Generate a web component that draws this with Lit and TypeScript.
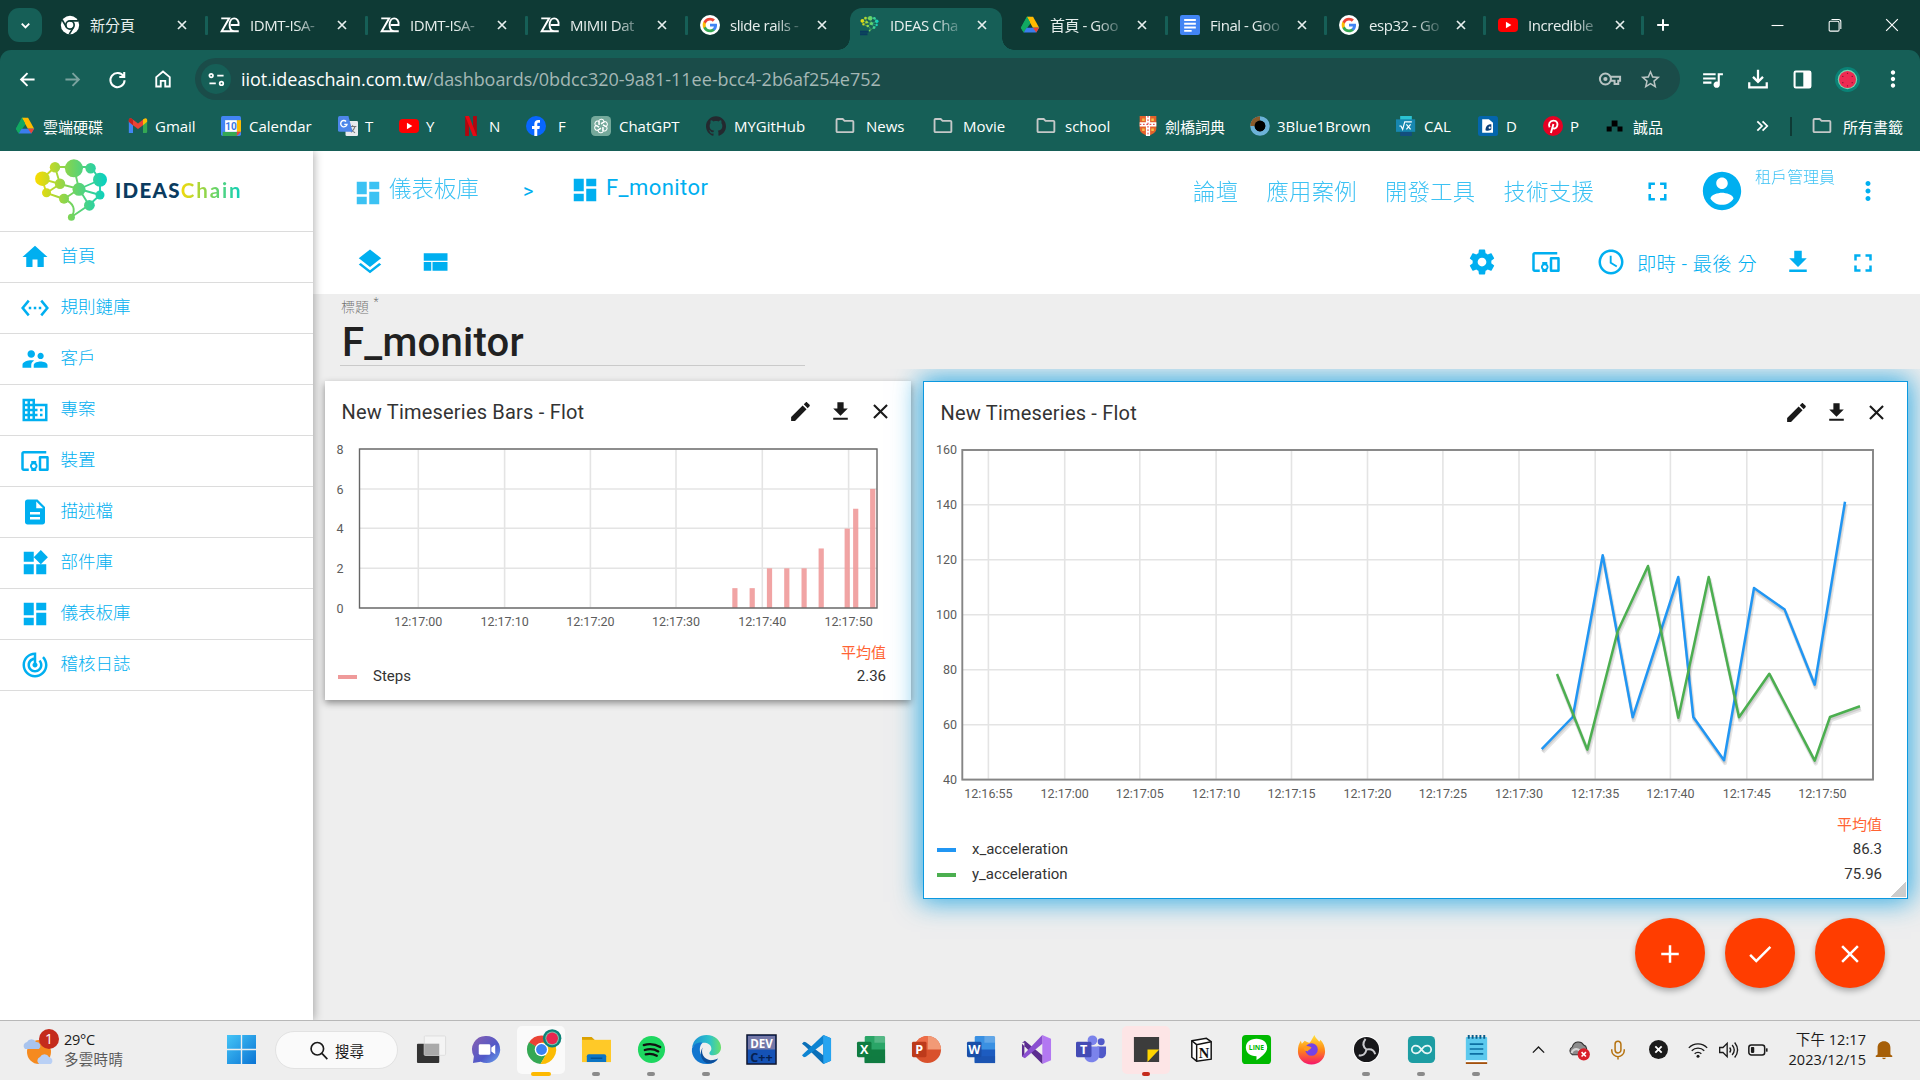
import { LitElement, html, svg, css, type SVGTemplateResult, type TemplateResult } from "lit";
import { customElement } from "lit/decorators.js";

type Art = SVGTemplateResult;

const pic = (art: Art | Art[], size = 20, box = "0 0 24 24"): TemplateResult =>
  html`<svg class="pic" width=${size} height=${size} viewBox=${box}>${art}</svg>`;
const glyph = (d: string, size = 30): TemplateResult =>
  html`<svg class="pic" width=${size} height=${size} viewBox="0 0 24 24" fill="currentColor"><path d=${d} /></svg>`;
const line = (d: string, size = 20, w = 2): TemplateResult =>
  html`<svg class="pic" width=${size} height=${size} viewBox="0 0 24 24" fill="none" stroke="currentColor" stroke-width=${w}><path d=${d} /></svg>`;

const P = {
  home: "M10 20v-6h4v6h5v-8h3L12 3 2 12h3v8z",
  rules: "M7.77 6.76L6.23 5.48.82 12l5.41 6.52 1.54-1.28L3.42 12l4.35-5.24zM7 13h2v-2H7v2zm10-2h-2v2h2v-2zm-6 2h2v-2h-2v2zm6.77-7.52l-1.54 1.28L20.58 12l-4.35 5.24 1.54 1.28L23.18 12l-5.41-6.52z",
  people: "M16.5 12c1.38 0 2.49-1.12 2.49-2.5S17.88 7 16.5 7C15.12 7 14 8.12 14 9.5s1.12 2.5 2.5 2.5zM9 11c1.66 0 2.99-1.34 2.99-3S10.66 5 9 5C7.34 5 6 6.34 6 8s1.34 3 3 3zm7.5 3c-1.83 0-5.5.92-5.5 2.75V19h11v-2.25c0-1.83-3.67-2.75-5.5-2.75zM9 13c-2.33 0-7 1.17-7 3.5V19h7v-2.25c0-.85.33-2.34 2.37-3.47C10.5 13.1 9.66 13 9 13z",
  domain: "M12 7V3H2v18h20V7H12zM6 19H4v-2h2v2zm0-4H4v-2h2v2zm0-4H4V9h2v2zm0-4H4V5h2v2zm4 12H8v-2h2v2zm0-4H8v-2h2v2zm0-4H8V9h2v2zm0-4H8V5h2v2zm10 12h-8v-2h2v-2h-2v-2h2v-2h-2V9h8v10zm-2-8h-2v2h2v-2zm0 4h-2v2h2v-2z",
  devices: "M3 6h18V4H3c-1.1 0-2 .9-2 2v12c0 1.1.9 2 2 2h4v-2H3V6zm10 6H9v1.78c-.61.55-1 1.33-1 2.22s.39 1.67 1 2.22V20h4v-1.78c.61-.55 1-1.34 1-2.22s-.39-1.67-1-2.22V12zm-2 5.5c-.83 0-1.5-.67-1.5-1.5s.67-1.5 1.5-1.5 1.5.67 1.5 1.5-.67 1.5-1.5 1.5zM22 8h-6c-.5 0-1 .5-1 1v10c0 .5.5 1 1 1h6c.5 0 1-.5 1-1V9c0-.5-.5-1-1-1zm-1 10h-4v-8h4v8z",
  doc: "M14 2H6c-1.1 0-1.99.9-1.99 2L4 20c0 1.1.89 2 1.99 2H18c1.1 0 2-.9 2-2V8l-6-6zm2 16H8v-2h8v2zm0-4H8v-2h8v2zm-3-5V3.5L18.5 9H13z",
  widgets: "M13 13v8h8v-8h-8zM3 21h8v-8H3v8zM3 3v8h8V3H3zm13.66-1.31L11 7.34 16.66 13l5.66-5.66-5.66-5.65z",
  dashboard: "M3 13h8V3H3v10zm0 8h8v-6H3v6zm10 0h8V11h-8v10zm0-18v6h8V3h-8z",
  audit: "M19.07 4.93l-1.41 1.41C19.1 7.79 20 9.79 20 12c0 4.42-3.58 8-8 8s-8-3.58-8-8c0-4.08 3.05-7.44 7-7.93v2.02C8.16 6.57 6 9.03 6 12c0 3.31 2.69 6 6 6s6-2.69 6-6c0-1.66-.67-3.16-1.76-4.24l-1.41 1.41C15.55 9.9 16 10.9 16 12c0 2.21-1.79 4-4 4s-4-1.79-4-4c0-1.86 1.28-3.41 3-3.86v2.14c-.6.35-1 .98-1 1.72 0 1.1.9 2 2 2s2-.9 2-2c0-.74-.4-1.38-1-1.72V2h-1C6.48 2 2 6.48 2 12s4.48 10 10 10 10-4.48 10-10c0-2.76-1.12-5.26-2.93-7.07z",
  full: "M7 14H5v5h5v-2H7v-3zm-2-4h2V7h3V5H5v5zm12 7h-3v2h5v-5h-2v3zM14 5v2h3v3h2V5h-5z",
  account: "M12 2C6.48 2 2 6.48 2 12s4.48 10 10 10 10-4.48 10-10S17.52 2 12 2zm0 3c1.66 0 3 1.34 3 3s-1.34 3-3 3-3-1.34-3-3 1.34-3 3-3zm0 14.2c-2.5 0-4.71-1.28-6-3.22.03-1.99 4-3.08 6-3.08 1.99 0 5.97 1.09 6 3.08-1.29 1.94-3.5 3.22-6 3.22z",
  more: "M12 8c1.1 0 2-.9 2-2s-.9-2-2-2-2 .9-2 2 .9 2 2 2zm0 2c-1.1 0-2 .9-2 2s.9 2 2 2 2-.9 2-2-.9-2-2-2zm0 6c-1.1 0-2 .9-2 2s.9 2 2 2 2-.9 2-2-.9-2-2-2z",
  layers: "M11.99 18.54l-7.37-5.73L3 14.07l9 7 9-7-1.63-1.27-7.38 5.74zM12 16l7.36-5.73L21 9l-9-7-9 7 1.63 1.27L12 16z",
  compact: "M3 19h6v-7H3v7zm7 0h12v-7H10v7zM3 5v6h19V5H3z",
  gear: "M19.43 12.98c.04-.32.07-.64.07-.98s-.03-.66-.07-.98l2.11-1.65c.19-.15.24-.42.12-.64l-2-3.46c-.12-.22-.39-.3-.61-.22l-2.49 1c-.52-.4-1.08-.73-1.69-.98l-.38-2.65C14.46 2.18 14.25 2 14 2h-4c-.25 0-.46.18-.49.42l-.38 2.65c-.61.25-1.17.59-1.69.98l-2.49-1c-.23-.09-.49 0-.61.22l-2 3.46c-.13.22-.07.49.12.64l2.11 1.65c-.04.32-.07.65-.07.98s.03.66.07.98l-2.11 1.65c-.19.15-.24.42-.12.64l2 3.46c.12.22.39.3.61.22l2.49-1c.52.4 1.08.73 1.69.98l.38 2.65c.03.24.24.42.49.42h4c.25 0 .46-.18.49-.42l.38-2.65c.61-.25 1.17-.59 1.69-.98l2.49 1c.23.09.49 0 .61-.22l2-3.46c.12-.22.07-.49-.12-.64l-2.11-1.65zM12 15.5c-1.93 0-3.5-1.57-3.5-3.5s1.57-3.5 3.5-3.5 3.5 1.57 3.5 3.5-1.57 3.5-3.5 3.5z",
  clock: "M11.99 2C6.47 2 2 6.48 2 12s4.47 10 9.99 10C17.52 22 22 17.52 22 12S17.52 2 11.99 2zM12 20c-4.42 0-8-3.58-8-8s3.58-8 8-8 8 3.58 8 8-3.58 8-8 8zm.5-13H11v6l5.25 3.15.75-1.23-4.5-2.67z",
  download: "M19 9h-4V3H9v6H5l7 7 7-7zM5 18v2h14v-2H5z",
  edit: "M3 17.25V21h3.75L17.81 9.94l-3.75-3.75L3 17.25zM20.71 7.04c.39-.39.39-1.02 0-1.41l-2.34-2.34c-.39-.39-1.02-.39-1.41 0l-1.83 1.83 3.75 3.75 1.83-1.83z",
  close: "M19 6.41L17.59 5 12 10.59 6.41 5 5 6.41 10.59 12 5 17.59 6.41 19 12 13.41 17.59 19 19 17.59 13.41 12z",
  add: "M19 13h-6v6h-2v-6H5v-2h6V5h2v6h6v2z",
  check: "M9 16.2L4.8 12l-1.4 1.4L9 19 21 7l-1.4-1.4L9 16.2z",
  queue: "M15 6H3v2h12V6zm0 4H3v2h12v-2zM3 16h8v-2H3v2zM17 6v8.18c-.31-.11-.65-.18-1-.18-1.66 0-3 1.34-3 3s1.34 3 3 3 3-1.34 3-3V8h3V6h-5z",
  star: "M22 9.24l-7.19-.62L12 2 9.19 8.63 2 9.24l5.46 4.73L5.82 21 12 17.27 18.18 21l-1.63-7.03L22 9.24zM12 15.4l-3.76 2.27 1-4.28-3.32-2.88 4.38-.38L12 6.1l1.71 4.04 4.38.38-3.32 2.88 1 4.28L12 15.4z",
  folder: "M9.17 6l2 2H20v10H4V6h5.17M10 4H4c-1.1 0-1.99.9-1.99 2L2 18c0 1.1.9 2 2 2h16c1.1 0 2-.9 2-2V8c0-1.1-.9-2-2-2h-8l-2-2z",
  bell: "M12 22c1.1 0 2-.7 2-1.6h-4c0 .9.9 1.6 2 1.6zM19 17v-7.5C19 5 16 2.5 12 2.5S5 5 5 9.5V17l-2 1.2V19.600h18v-1.400z",
};

const ART: Record<string, Art> = {
  chromeMono: svg`<circle cx="12" cy="12" r="11" fill="#fff"/><circle cx="12" cy="12" r="5" fill="none" stroke="#0e3a35" stroke-width="2"/><path d="M12 7H22M7.700 14.500L2.700 6M16.300 14.500L11.200 23" stroke="#0e3a35" stroke-width="2"/>`,
  zen: svg`<g fill="none" stroke="#fff" stroke-width="2.300"><path d="M1.500 4H11L2 19.500H22.500M13 12H22.300C23 7 20 4 17 4S11.500 7 11.500 12s2.500 7.500 6 7.500"/></g>`,
  google: svg`<circle cx="12" cy="12" r="12" fill="#fff"/><g transform="translate(2.400 2.400) scale(.8)"><path fill="#4285F4" d="M22.560 12.250c0-.78-.07-1.530-.2-2.250H12v4.260h5.920c-.26 1.370-1.040 2.530-2.210 3.310v2.770h3.570c2.080-1.920 3.280-4.740 3.280-8.090z"/><path fill="#34A853" d="M12 23c2.970 0 5.460-.98 7.280-2.660l-3.570-2.770c-.98.66-2.230 1.060-3.710 1.060-2.860 0-5.290-1.930-6.160-4.530H2.180v2.840C3.990 20.530 7.700 23 12 23z"/><path fill="#FBBC05" d="M5.840 14.090c-.22-.66-.35-1.360-.35-2.090s.13-1.430.35-2.090V7.070H2.180C1.430 8.550 1 10.220 1 12s.43 3.450 1.180 4.930l2.850-2.220.81-.62z"/><path fill="#EA4335" d="M12 5.380c1.620 0 3.060.56 4.210 1.640l3.150-3.150C17.450 2.090 14.970 1 12 1 7.700 1 3.990 3.470 2.180 7.070l3.660 2.840c.87-2.600 3.300-4.530 6.160-4.530z"/></g>`,
  drive: svg`<path fill="#11a861" d="M8.300 2h3.800L15 7 4.500 21 1 15.500z"/><path fill="#ffba00" d="M8.300 2h7.400L23 15.300h-7.600z"/><path fill="#11a861" d="M8.300 2L1 15.300 4.500 21 12 8.500z"/><path fill="#3b7ded" d="M8 15.300h15L19.500 21h-15z"/><path fill="#ea4335" d="M15.500 15.300H23L19.500 21z"/>`,
  docs: svg`<rect x="0" y="0" width="24" height="24" rx="2.500" fill="#4285f4"/><path d="M5 6h14M5 10.500h14M5 15h14M5 19h9" stroke="#fff" stroke-width="2.300"/>`,
  youtube: svg`<rect x="0" y="3.500" width="24" height="17" rx="4.500" fill="#f00"/><path d="M9.500 8.200v7.600L16 12z" fill="#fff"/>`,
  gmail: svg`<path fill="#4285f4" d="M1 20.500V6l5 4v10.500z"/><path fill="#34a853" d="M18 20.500V10l5-4v13a1.500 1.500 0 0 1-1.500 1.500z"/><path fill="#ea4335" d="M1 7V5c0-2 2-3 4-1.500l7 5.500 7-5.500L18 11l-6 4.500L6 11z"/><path fill="#fbbc04" d="M18 11V4.300l1-.8C21 2 23 3 23 5v2z"/><path fill="#c5221f" d="M6 11L1 7V5c0-2 2-3 4-1.500l1 .8z"/>`,
  calendar: svg`<rect width="24" height="24" rx="2" fill="#4285f4"/><path fill="#fbbc04" d="M19 5h5v14h-5z"/><path fill="#34a853" d="M2 19h17v5H2z"/><path fill="#ea4335" d="M19 19h5l-5 5z"/><path fill="#fff" d="M5 5h14v14H5z"/><text x="12" y="16.300" text-anchor="middle" font-size="12" font-weight="700" font-family="Roboto" fill="#3b78e7">10</text>`,
  translate: svg`<rect x="9" y="6" width="15" height="18" rx="1.500" fill="#e8eaed"/><path d="M13 12.500h9M17.500 11v2M20.500 12.500c-1 4-3 5.500-5 7M15 15c1 2 3 4 5.500 5" stroke="#777" stroke-width="1.300" fill="none"/><path d="M2 0h10.500l5 19H2a2 2 0 0 1-2-2V2a2 2 0 0 1 2-2z" fill="#4d86ea"/><path d="M9.700 6.500A3.800 3.800 0 1 0 10.800 10H7.500" stroke="#fff" stroke-width="1.700" fill="none"/>`,
  netflix: svg`<path fill="#b1060f" d="M5 0h4.500v24H5zM14.500 0H19v24h-4.500z"/><path fill="#e50914" d="M5 0h4.600L19 24h-4.600z"/>`,
  facebook: svg`<circle cx="12" cy="12" r="12" fill="#0866ff"/><path fill="#fff" d="M10 24v-8.500H7.200V12H10V9.500C10 6 12 4.700 14.500 4.700c1 0 1.900.1 2.300.2V8h-1.700c-1.300 0-1.600.7-1.600 1.600V12h3.200l-.6 3.500h-2.600V24z"/>`,
  gpt: svg`<rect width="24" height="24" rx="5" fill="#75a99b"/><g fill="none" stroke="#fff" stroke-width="1.300">${[0, 60, 120, 180, 240, 300].map((a) => svg`<path transform="rotate(${a} 12 12)" d="M12 9.500L15.500 7.500V6.500C15 3.500 11 3 9.500 5.500V10.500"/>`)}</g>`,
  github: svg`<path fill="#24292f" d="M12 .297c-6.630 0-12 5.373-12 12 0 5.303 3.438 9.800 8.205 11.385.6.113.82-.258.82-.577 0-.285-.01-1.040-.015-2.040-3.338.724-4.042-1.610-4.042-1.610C4.422 18.070 3.633 17.700 3.633 17.700c-1.087-.744.084-.729.084-.729 1.205.084 1.838 1.236 1.838 1.236 1.070 1.835 2.809 1.305 3.495.998.108-.776.417-1.305.76-1.605-2.665-.3-5.466-1.332-5.466-5.930 0-1.310.465-2.380 1.235-3.220-.135-.303-.54-1.523.105-3.176 0 0 1.005-.322 3.300 1.230.96-.267 1.980-.399 3-.405 1.020.006 2.040.138 3 .405 2.280-1.552 3.285-1.230 3.285-1.230.645 1.653.24 2.873.12 3.176.765.84 1.230 1.910 1.230 3.220 0 4.610-2.805 5.625-5.475 5.920.42.36.81 1.096.81 2.220 0 1.606-.015 2.896-.015 3.286 0 .315.21.69.825.57C20.565 22.092 24 17.592 24 12.297c0-6.627-5.373-12-12-12"/>`,
  folder: svg`<path fill="#c5c8c8" transform="translate(-1.500 -2) scale(1.120)" d=${P.folder} />`,
  cambridge: svg`<path fill="#e3622b" d="M2 0h20v15c0 5-5 7-10 9C7 22 2 20 2 15z"/><path d="M12 0v24M2 10h20" stroke="#fff" stroke-width="5"/><path d="M12 0v24M2 10h20" stroke="#d33" stroke-width="1.200" stroke-dasharray="2 2"/><path d="M5 3h3v3H5zM16 3h3v3h-3zM5 15h3v3H5zM16 15h3v3h-3z" fill="#f5c04a"/>`,
  blue: svg`<circle cx="12" cy="12" r="9" fill="#000" stroke="#6cb2d8" stroke-width="5.500"/><path d="M3 12a9 9 0 0 1 9-9" fill="none" stroke="#8a5a2b" stroke-width="5.500"/><circle cx="12" cy="12" r="6.500" fill="#000"/>`,
  cal: svg`<path fill="#2bc3d2" d="M5 0h14v5H5z"/><path fill="#134e7e" d="M5 18h14v6H5z"/><rect x="0" y="4" width="23" height="15" fill="#1787b0"/><path d="M4 12l2 0 2 4 2.500-9H19M12.500 10l5 6M17.500 10l-5 6" stroke="#fff" stroke-width="1.400" fill="none"/>`,
  dj: svg`<rect width="24" height="24" rx="3" fill="#0465ac"/><path d="M5 4h8l5 4v12H5z" fill="#fff"/><path d="M9 17c0-5 3-7 7-7v6c-2 2-5 2-7 1z" fill="#0b3f78"/><circle cx="14" cy="14" r="1.300" fill="#fff"/>`,
  pinterest: svg`<circle cx="12" cy="12" r="12" fill="#e60023"/><path d="M9.500 20.500L12.500 9.500M8 13.500C6 10 8 5.500 12.500 5.500S18 9 17 12s-4.500 4-5.500 2" stroke="#fff" stroke-width="2.300" fill="none"/>`,
  eslite: svg`<path d="M8 5.500h7v7H8zM2 12.500h6v6H2zM15 12.500h6v6h-6z" fill="#000"/>`,
};

const BRAIN_NODES: [number, number, number][] = [
  [42.4, 178.7, 7.3], [55, 167.3, 5.2], [73.9, 168.3, 9], [90.6, 168.3, 5.2], [100, 179.7, 7], [100, 195, 4.5],
  [79, 189.3, 6.5], [60, 183.7, 5.2], [46.5, 192.7, 4.5], [64, 198.7, 5], [89.4, 205.3, 5.4], [71.4, 217.3, 3.5],
];
const brain = svg`<defs><linearGradient id="brain" gradientUnits="userSpaceOnUse" x1="35" x2="107" y1="0" y2="0"><stop offset="0" stop-color="#fbdc00"/><stop offset=".5" stop-color="#76d45c"/><stop offset="1" stop-color="#06d0c4"/></linearGradient></defs>
  <path fill="none" stroke="url(#brain)" stroke-width="1.900" d="M42 179L55 167H91L100 180V195L89 205L71.400 217M42 179L46.500 193L64 199C74 203 76 210 71.400 217M55 167L60 184L42 179M60 184L79 189L74 168M79 189L100 180M79 189L100 195M79 189L89 205M79 189L64 199M60 184L46.500 193"/>
  ${BRAIN_NODES.map(([x, y, r]) => svg`<circle cx=${x} cy=${y} r=${r} fill="url(#brain)"/>`)}`;

/* [favicon, title, width, active, separator after] */
const TABS: [Art, string, number, boolean, boolean][] = [
  [ART.chromeMono, "新分頁", 160, false, true],
  [ART.zen, "IDMT-ISA-", 160, false, true],
  [ART.zen, "IDMT-ISA-", 160, false, true],
  [ART.zen, "MIMII Dat", 160, false, true],
  [ART.google, "slide rails -", 160, false, false],
  [svg`<g transform="scale(.3) translate(-33 -155)">${brain}</g><path d="M0 20h10M0 23h9" stroke="#0a3b5f" stroke-width="2.500"/>`, "IDEAS Cha", 160, true, false],
  [ART.drive, "首頁 - Goo", 160, false, true],
  [ART.docs, "Final - Goo", 159, false, true],
  [ART.google, "esp32 - Go", 159, false, true],
  [ART.youtube, "Incredible", 158, false, true],
];

/* [icon, label, distance to next item, gap between icon and label] */
const BOOKMARKS: [Art, string, number, number][] = [
  [ART.drive, "雲端硬碟", 113, 8], [ART.gmail, "Gmail", 93, 7], [ART.calendar, "Calendar", 117, 8],
  [ART.translate, "T", 61, 7], [ART.youtube, "Y", 62, 7], [ART.netflix, "N", 65, 8], [ART.facebook, "F", 65, 12],
  [ART.gpt, "ChatGPT", 115, 8], [ART.github, "MYGitHub", 129, 8], [ART.folder, "News", 98, 11],
  [ART.folder, "Movie", 103, 10], [ART.folder, "school", 102, 9], [ART.cambridge, "劍橋詞典", 112, 7],
  [ART.blue, "3Blue1Brown", 146, 7], [ART.cal, "CAL", 82, 8], [ART.dj, "D", 65, 8],
  [ART.pinterest, "P", 62, 7], [ART.eslite, "誠品", 150, 8],
];

const MENU: [string, string][] = [
  [P.home, "首頁"], [P.rules, "規則鏈庫"], [P.people, "客戶"], [P.domain, "專案"], [P.devices, "裝置"],
  [P.doc, "描述檔"], [P.widgets, "部件庫"], [P.dashboard, "儀表板庫"], [P.audit, "稽核日誌"],
];

const office = (dark: string, mid: string, light: string, letter: string): Art => svg`
  <rect x="9" y="2" width="21" height="28" rx="1.500" fill=${light}/><rect x="9" y="16" width="21" height="14" fill=${mid}/><path d="M19 2h11v7H19z" fill="#fff" opacity=".2"/><rect x="9" y="23" width="21" height="7" fill=${dark} opacity=".6"/>
  <rect x="1" y="8" width="15" height="16" rx="1.500" fill=${dark}/><text x="8.500" y="21" text-anchor="middle" font-size="13" font-weight="700" font-family="Open Sans" fill="#fff">${letter}</text>`;

const APPS: { art: Art; cls?: string; dot?: string }[] = [
  { art: svg`<rect x="1" y="10" width="23" height="20" rx="1" fill="#333"/><rect x="8.500" y="2" width="22" height="20" rx="1" fill="#f4f4f4" stroke="#dedede"/><path d="M8.500 10H24v12H8.500z" fill="#a9a9a9"/>` },
  { art: svg`<defs><linearGradient id="chat" x2="1" y2="1"><stop stop-color="#8a5fb0"/><stop offset=".6" stop-color="#5059c9"/><stop offset="1" stop-color="#6aa5ee"/></linearGradient></defs><path d="M16 2a14 14 0 1 1-6 26.600L2 30l1-7A14 14 0 0 1 16 2z" fill="url(#chat)"/><rect x="8" y="10.500" width="12" height="11" rx="1.500" fill="#fff"/><path d="M21 14l4-3v10l-4-3z" fill="#fff"/>` },
  { art: svg`<path d="M16 16L3 9A15 15 0 0 1 29 9z" fill="#ea4335"/><path d="M16 16L3 8.500A15 15 0 0 0 15 31l7-12z" fill="#34a853"/><path d="M15 31A15 15 0 0 0 29 8.500H16l6 10z" fill="#fbbc04"/><circle cx="16" cy="16" r="7" fill="#fff"/><circle cx="16" cy="16" r="5.600" fill="#3b82f0"/><circle cx="27" cy="4.500" r="9.500" fill="#0b8378"/><circle cx="27" cy="4.500" r="7" fill="#7fbfa8"/><circle cx="27" cy="4.500" r="6" fill="#e8274f"/>`, cls: "open", dot: "wide" },
  { art: svg`<path d="M1 3h10l3 3v8H1z" fill="#dba100"/><path d="M1 6h30v23H1z" fill="#ffc928"/><path d="M6 29v-6q0-2 2-2h16q2 0 2 2v6z" fill="#0b74c4"/><path d="M10 25h12" stroke="#05518f" stroke-width="1.500"/>`, dot: "grey" },
  { art: svg`<circle cx="16" cy="16" r="14" fill="#1ed760"/><path d="M8 11.500c6-2 12-1 17 2M9 16.500c5-1.500 10-1 14 1.500M10 21c4-1 8-.5 11.500 1.500" stroke="#111" stroke-width="2.300" fill="none" stroke-linecap="round"/>`, dot: "grey" },
  { art: svg`<defs><linearGradient id="edge" x2="1"><stop stop-color="#1b8fd6"/><stop offset=".6" stop-color="#2cc3c9"/><stop offset="1" stop-color="#6be06a"/></linearGradient></defs><path d="M1 15C2 5 9 1 16 1c9 0 15 6 15 13 0 5-4 8-8 8-3 0-4-1-4-2 0-2 2-2 2-5 0-4-4-6-8-6-6 0-11 3-12 6z" fill="url(#edge)"/><path d="M1 15c2-5 7-7 11-6-4 3-5 14 5 18 5 2 9 0 11-2-3 5-8 6-12 6C6 31 0 23 1 15z" fill="#1276cf"/><path d="M12 14c-2 6 1 12 8 13 4 0 7-1 8-2-3 5-8 6-12 5-5-2-8-10-4-16z" fill="#0c4f9c"/>`, dot: "grey" },
  { art: svg`<rect x="1" y="1" width="30" height="30" fill="#1552b5" stroke="#10142b" stroke-width="1.500"/><rect x="2" y="2" width="28" height="14" fill="#7478a8"/><text x="16" y="14.500" text-anchor="middle" font-size="12" font-weight="700" font-family="Open Sans" fill="#fff">DEV</text><text x="16" y="28.500" text-anchor="middle" font-size="13" font-weight="700" font-family="Open Sans" fill="#06204f">C++</text>` },
  { art: svg`<path d="M23 1l8 3.500v23L23 31 4 12.500 1 10l2-2 2 .5L23 22z" fill="#0a6fb8"/><path d="M23 10L5 23.500 3 24l-2-2L23 1z" fill="#0d84d2"/><path d="M23 1l8 3.500v23L23 31z" fill="#26a4f0"/>` },
  { art: office("#107c41", "#107c41", "#2aa567", "X") },
  { art: svg`<circle cx="17" cy="16" r="14" fill="#d9512c"/><path d="M17 2a14 14 0 0 1 14 14H17z" fill="#f29a76"/><path d="M17 2A14 14 0 0 0 3 16h14z" fill="#ee6c47"/><rect x="1" y="8" width="15" height="16" rx="1.500" fill="#bd3a1b"/><text x="8.500" y="21" text-anchor="middle" font-size="13" font-weight="700" font-family="Open Sans" fill="#fff">P</text>` },
  { art: office("#1a4fa8", "#1d5cc0", "#3a90e2", "W") },
  { art: svg`<path d="M22 1l9 4v22l-9 4z" fill="#b378f2"/><path d="M1 9l3-2 18 15v9L1 10zM1 9v14l2.500 1.500V9z" fill="#5c2d91"/><path d="M1 23l3 2L22 10V1z" fill="#8a4fd0"/>` },
  { art: svg`<circle cx="26" cy="8" r="3.600" fill="#5059c9"/><path d="M22 13h9v7a5 5 0 0 1-8 4z" fill="#5059c9"/><circle cx="17" cy="6.500" r="5" fill="#7b83eb"/><path d="M9 13h15v9a8 8 0 0 1-15 3z" fill="#7b83eb"/><rect x="0" y="8" width="16" height="16" rx="1.500" fill="#444bb5"/><text x="8" y="21" text-anchor="middle" font-size="13" font-weight="700" font-family="Open Sans" fill="#fff">T</text>` },
  { art: svg`<path d="M3 3h26v13L16 29H3z" fill="#3c3c3c"/><path d="M29 16v13H16z" fill="#3c3c3c"/><path d="M17 16h12L17 29z" fill="#ffd500"/>`, cls: "alert", dot: "red" },
  { art: svg`<path d="M6 7l15-2.500L26 8v18l-15 2-5-4z" fill="#fff" stroke="#111" stroke-width="1.500"/><path d="M6 7l5 4 15-3M11 11v17" stroke="#111" stroke-width="1.500" fill="none"/><text x="18.500" y="24.500" text-anchor="middle" font-size="15" font-weight="700" font-family="Liberation Serif" fill="#111">N</text>` },
  { art: svg`<rect x="1" y="1" width="30" height="30" rx="4" fill="#00b900"/><path d="M16 5c7 0 11 4 11 9 0 6-8 11-11 13v-4C9 23 5 19 5 14s4-9 11-9z" fill="#fff"/><text x="16" y="17" text-anchor="middle" font-size="7" font-weight="700" font-family="Open Sans" fill="#00b900">LINE</text>` },
  { art: svg`<defs><linearGradient id="fox" x2="0" y2="1"><stop stop-color="#ffe23a"/><stop offset=".5" stop-color="#ff8a16"/><stop offset="1" stop-color="#f5156c"/></linearGradient></defs><path d="M19 1c1 3 3 4 5 7 1-1 1-2 1-2 3 3 5 7 5 12a14 13.500 0 0 1-28 0c0-5 1-8 3-11l1 3 3-3c2 1 3 2 5 2 2-2 3-5 5-8z" fill="url(#fox)"/><circle cx="16" cy="16" r="6.500" fill="#7542e5"/><path d="M8 14c3-3 6-1 8 0-1 2-3 2-4 4 0 0-4 0-4-4z" fill="#ff9a1c"/>` },
  { art: svg`<circle cx="16" cy="16" r="14" fill="#fff"/><circle cx="16" cy="16" r="13" fill="#17171a"/><g stroke="#c9c9cd" stroke-width="2" fill="none"><path d="M16 16c-4-3-4-7-1-11M16 16c5-1 8 1 9 5M16 16c-1 5-4 7-8 6"/></g>`, dot: "grey" },
  { art: svg`<rect x="2" y="2" width="28" height="28" rx="5" fill="#1d9da3"/><path d="M16 16c-2-3-4-4-6-4a4 4 0 0 0 0 8c2 0 4-1 6-4s4-4 6-4a4 4 0 0 1 0 8c-2 0-4-1-6-4z" stroke="#e8f6f6" stroke-width="1.800" fill="none"/>`, dot: "grey" },
  { art: svg`<rect x="5" y="3" width="22" height="26" rx="1" fill="#5cc9ee"/><path d="M5 29h22v2H5z" fill="#a3500b"/><path d="M5 27h22v2H5z" fill="#fff"/><path d="M8 1v4M12 1v4M16 1v4M20 1v4M24 1v4" stroke="#0b5c88" stroke-width="2"/><path d="M9 10.500h14M9 15.500h14M9 20.500h14" stroke="#0d6fa3" stroke-width="1.700"/>`, dot: "grey" },
];

const BAR_X: [number, number][] = [
  [732.3, 1], [749.6, 1], [766.9, 2], [784.2, 2], [801.5, 2], [818.6, 3], [844.6, 4], [853.1, 5], [870.1, 6],
];
const BAR_TICKS: [number, string][] = [
  [418.3, "12:17:00"], [504.6, "12:17:10"], [590.4, "12:17:20"], [676, "12:17:30"], [762.3, "12:17:40"], [848.6, "12:17:50"],
];
const LINE_TICKS: [number, string][] = [
  [988.4, "12:16:55"], [1064.7, "12:17:00"], [1139.8, "12:17:05"], [1216.1, "12:17:10"], [1291.5, "12:17:15"], [1367.5, "12:17:20"],
  [1442.9, "12:17:25"], [1519, "12:17:30"], [1595.2, "12:17:35"], [1670.4, "12:17:40"], [1746.8, "12:17:45"], [1822.4, "12:17:50"],
];
const BLUE = "1541.700,749.200 1572.700,717 1602.700,555.300 1632.700,717.300 1678.300,577 1693.300,717 1724,760.200 1754,588 1784.700,609.600 1814.700,684.700 1845,501.800";
const GREEN = "1557,674 1587.300,749.600 1617.700,631.200 1648,566 1678.300,717.700 1708.700,577 1739,717.300 1769.300,673.700 1814.700,760.600 1830,717 1860,706.300";

@customElement("app-root")
export class AppRoot extends LitElement {
  static styles = css`
    :host { display: flex; flex-direction: column; width: 1920px; height: 1080px; overflow: hidden; background: #eee; font-family: Roboto, "Noto Sans CJK TC", sans-serif; }
    * { box-sizing: border-box; }
    .pic { display: block; flex: none; overflow: visible; }
    .row { display: flex; align-items: center; }
    .cell { display: flex; align-items: center; justify-content: center; flex: none; }
    .ui { font-family: "Open Sans", "Noto Sans CJK TC", sans-serif; }

    .tabs { height: 50px; background: #0e3a35; color: #e8efee; flex: none; display: flex; }
    .search-tabs { width: 34px; height: 34px; margin: 8px 4px 0 8px; border-radius: 11px; background: #165f57; color: #fff; }
    .tab { display: flex; align-items: center; height: 42px; margin-top: 8px; padding: 0 14px 8px; position: relative; flex: none; }
    .tab-title { margin-left: 10px; width: 74px; white-space: nowrap; font-size: 15px; line-height: 24px; letter-spacing: -0.45px; -webkit-mask-image: linear-gradient(90deg, #000 62%, rgba(0, 0, 0, 0.12) 98%); }
    .tab-title.short { -webkit-mask-image: none; letter-spacing: 0; }
    .tab-x { margin-left: 12px; }
    .tab.on::before { content: ""; position: absolute; left: 4px; top: 0; width: 152px; height: 42px; background: #165f57; border-radius: 12px 12px 0 0; }
    .tab.on::after { content: ""; position: absolute; left: -8px; bottom: 0; width: 176px; height: 12px; background: radial-gradient(circle at 0 0, transparent 11.500px, #165f57 12px) 0 0 / 12px 12px no-repeat, radial-gradient(circle at 100% 0, transparent 11.500px, #165f57 12px) 100% 0 / 12px 12px no-repeat; }
    .tab.on > * { position: relative; z-index: 1; }
    .tab.sep::after { content: ""; position: absolute; right: -2px; top: 8px; width: 3px; height: 19px; border-radius: 1px; background: #165f57; }
    .plus { margin: 10px 0 0 6px; width: 30px; height: 30px; color: #fff; }
    .win { margin: 0 0 0 auto; height: 50px; color: #fff; }
    .win .cell { width: 57px; }

    .toolbar { background: #165f57; height: 101px; flex: none; color: #fff; border-radius: 11px 11px 0 0; }
    .chrome { background: #0e3a35; flex: none; }
    .nav { height: 58px; padding-left: 5px; }
    .nav .cell { width: 45px; }
    .dim { color: #7ba39f; }
    .omni { width: 1485px; height: 42px; border-radius: 21px; background: #1a4c49; margin-left: 10px; padding: 0 9px 0 6px; display: flex; align-items: center; }
    .omni .info { width: 30px; height: 30px; border-radius: 15px; background: #165f57; }
    .url { margin-left: 10px; flex: 1; font-size: 18px; letter-spacing: -0.04px; color: #a4b7b5; white-space: nowrap; }
    .url b { font-weight: 400; color: #fff; }
    .omni .cell { width: 41px; color: #b9c4c3; }
    .omni .cell.info { width: 30px; color: #fff; }
    .tools .cell { width: 45px; }
    .tools { margin-left: 10px; }
    .marks { height: 36px; padding-left: 15px; font-size: 15px; white-space: nowrap; display: flex; align-items: center; }
    .mark { display: flex; align-items: center; flex: none; letter-spacing: -0.02px; }
    .mark-sep { width: 2px; height: 19px; background: #0e3a35; margin: 0 20px 0 21px; }
    .mark.all { gap: 11px; }

    .page { flex: none; height: 869px; display: flex; }
    .side { width: 313px; background: #fff; flex: none; box-shadow: 1px 0 9px rgba(0, 0, 0, 0.32); z-index: 3; color: #00aff0; clip-path: inset(0 -14px 0 0); }
    .logo { height: 81px; border-bottom: 1px solid #dcdcdc; display: flex; align-items: flex-start; padding-left: 34px; }
    .brand { font: 900 20.500px/24px Lato, sans-serif; color: #0a3b5f; margin: 27px 0 0 8px; letter-spacing: 1.300px; }
    .brand span { font-weight: 700; letter-spacing: 1.900px; background: linear-gradient(90deg, #f3d90a, #76d45c 50%, #06d0c4); -webkit-background-clip: text; background-clip: text; color: transparent; }
    .item { height: 51px; border-bottom: 1px solid #dcdcdc; display: flex; align-items: center; padding-left: 20px; font-size: 17.500px; font-weight: 300; }
    .item span { margin: -6px 0 0 10.600px; }

    .main { flex: 1; display: flex; flex-direction: column; min-width: 0; }
    .head { height: 78px; background: #fff; color: #00aff0; padding: 2px 0 0 40px; flex: none; font-size: 22.300px; font-weight: 300; }
    .faded { opacity: 0.76; }
    .first { padding-top: 4px; }
    .crumb { margin-left: 6px; margin-top: -9px; line-height: 30px; letter-spacing: 0.200px; }
    .second { margin-bottom: 3px; }
    .crumb2 { font-size: 22px; font-weight: 400; margin-left: 5.500px; margin-top: -5px; letter-spacing: 0.450px; }
    .gt { font-size: 20px; font-weight: 400; margin: 0 37px 0 44px; }
    .links { display: flex; gap: 28.200px; margin-left: auto; margin-top: -2px; letter-spacing: 0.300px; }
    .expand { width: 126px; }
    .avatar { width: 4px; }
    .tenant { font-size: 16px; width: 98px; margin: -30px 0 0 31px; }
    .menu { width: 30px; margin-right: 37px; }
    .sub { height: 65px; background: #fff; color: #00aff0; padding-left: 42px; flex: none; font-size: 19.400px; font-weight: 300; }
    .views { gap: 35px; }
    .filters { margin-left: auto; gap: 34.700px; padding-top: 1px; }
    .window { width: 146px; margin-left: 11px; word-spacing: 1px; padding-top: 1px; }
    .exports { gap: 35px; margin-right: 42px; }
    .exports .pic + .pic { margin-top: 3px; }
    .edit { height: 75px; padding: 3px 0 0 27px; flex: none; }
    .label { font-size: 14px; line-height: 20px; color: rgba(0, 0, 0, 0.54); font-weight: 300; padding-left: 1px; }
    .label sup { font-size: 12px; line-height: 0; margin-left: 1px; }
    .name { width: 465px; height: 49px; border-bottom: 1px solid #cacaca; font-weight: 500; font-size: 40px; line-height: 51px; color: #212121; padding-left: 2px; letter-spacing: 0.250px; }
    .board { flex: 1; overflow: hidden; padding: 12px 12px 0; display: flex; gap: 12px; align-items: flex-start; position: relative; }
    .card { background: #fff; flex: none; display: flex; flex-direction: column; color: rgba(0, 0, 0, 0.87); }
    .bars { width: 586px; height: 319px; box-shadow: 0 3px 7px rgba(0, 0, 0, 0.42); }
    .lines { width: 985px; height: 518px; border: 1px solid #0b98e0; box-shadow: 0 0 25px 3px rgba(3, 155, 225, 0.8); position: relative; }
    .card-head { height: 59px; padding: 3px 18px 0 16.500px; font-size: 20px; letter-spacing: 0.2px; flex: none; color: #333; }
    .lines .card-head { height: 58px; padding-top: 4px; }
    .card-head .acts { margin: -1px 0 0 auto; display: flex; gap: 15px; color: #1a1a1a; }
    .legend { font-size: 15px; padding: 0 25px 0 13px; color: #333; margin-top: -1px; }
    .legend .r { height: 24.500px; display: flex; align-items: center; justify-content: space-between; }
    .lines .legend .avg { height: 25px; }
    .lines .legend .r + .r { height: 25px; }
    .legend .avg { color: #ff6333; justify-content: flex-end; font-size: 15px; }
    .key { display: flex; align-items: center; }
    .sw { width: 19px; height: 4px; margin-right: 16px; margin-top: 2px; }
    .sw.red { background: #ef9a9a; } .sw.blue { background: #2196f3; } .sw.green { background: #4caf50; }
    .tick { font: 12.500px Roboto, sans-serif; fill: #5c5c5c; }
    .grip { position: absolute; right: 1px; bottom: 1px; width: 15px; height: 15px; background: linear-gradient(135deg, transparent 50%, #ccc 50%); }
    .fabs { position: absolute; right: 35px; bottom: 32px; display: flex; gap: 20px; }
    .fab { width: 70px; height: 70px; border-radius: 50%; background: #ff3d00; color: #fff; box-shadow: 0 3px 6px rgba(0, 0, 0, 0.3); padding-top: 1px; }

    .task { height: 60px; flex: none; border-top: 1px solid #b8b8b8; background: #eee; display: flex; align-items: center; color: #1b1b1b; font-size: 14.500px; z-index: 4; padding-bottom: 2px; }
    .weather { width: 214px; padding-left: 24px; line-height: 20px; }
    .weather div { margin-left: 8px; letter-spacing: -0.3px; }
    .grey-text { color: #5a5a5a; letter-spacing: 0.3px; }
    .pill { width: 123px; height: 38px; border-radius: 19px; background: #fafafa; margin: 1px 5.500px 0 6px; border: 1px solid #e2e2e2; gap: 6px; font-size: 14.500px; }
    .app { width: 55px; height: 58px; position: relative; }
    .app.open::before, .app.alert::before { content: ""; position: absolute; inset: 5px 3.500px; border-radius: 5px; background: #fafafa; }
    .app.alert::before { background: #fde5e6; }
    .app .pic { position: relative; }
    .dot { position: absolute; bottom: 3px; left: 23.500px; width: 8px; height: 4px; border-radius: 2px; background: #8a8a8a; }
    .dot.red { background: #c42b1c; } .dot.wide { background: #fdb900; width: 20px; left: 17.500px; }
    .tray { display: flex; align-items: center; margin-left: 14.500px; flex: 1; }
    .tray .cell { width: 40px; } .tray .slim { width: 30px; }
    .tray .tight { margin-left: -5px; }
    .mic { color: #b5720f; }
    .time { margin: 0 -2px 0 auto; text-align: right; line-height: 20px; letter-spacing: 0.050px; }
    .bell { color: #a65f08; margin-right: 16px; }
  `;

  private grid(ticks: [number, string][], yTicks: [number, string][], x0: number, x1: number, y0: number, y1: number, labelY: number, labelX: number) {
    return svg`
      ${ticks.map(([x]) => svg`<path d="M${x} ${y0}V${y1}" stroke="#e4e4e4" stroke-width="1.600"/>`)}
      ${yTicks.map(([y]) => svg`<path d="M${x0} ${y}H${x1}" stroke="#e4e4e4" stroke-width="1.600"/>`)}
      ${ticks.map(([x, t]) => svg`<text class="tick" x=${x} y=${labelY} text-anchor="middle">${t}</text>`)}
      ${yTicks.map(([y, t]) => svg`<text class="tick" x=${labelX} y=${y + 4.5} text-anchor="end">${t}</text>`)}`;
  }

  private browser() {
    return html`
      <div class="chrome ui">
        <div class="tabs">
          <div class="search-tabs cell">${line("M6 9l6 6 6-6", 15, 3)}</div>
          ${TABS.map(([art, title, w, on, sep]) => html`
            <div class="tab ${on ? "on" : ""} ${sep ? "sep" : ""}" style="width:${w}px">
              ${pic(art, 20)}<span class="tab-title ${title.length < 4 ? "short" : ""}">${title}</span>
              <span class="tab-x">${line("M4 4l16 16M20 4L4 20", 12, 3.400)}</span>
            </div>`)}
          <div class="plus cell">${line("M12 2v20M2 12h20", 14, 3.400)}</div>
          <div class="win row">
            <div class="cell">${line("M1 12h22", 13, 2)}</div>
            <div class="cell">${line("M4 5.500h12a3 3 0 0 1 3 3v12a2 2 0 0 1-2 2H4a2 2 0 0 1-2-2v-13a2 2 0 0 1 2-2zM6 2.500h12a4 4 0 0 1 4 4V19", 14, 1.800)}</div>
            <div class="cell">${line("M2 2l20 20M22 2L2 22", 14, 2)}</div>
          </div>
        </div>
        <div class="toolbar">
          <div class="nav row">
            <div class="cell">${line("M22 12H3M12 3l-9 9 9 9", 17, 2.700)}</div>
            <div class="cell dim">${line("M2 12h19M12 3l9 9-9 9", 17, 2.700)}</div>
            <div class="cell">${line("M20.500 7.500A10 10 0 1 0 22 13M21.500 1.500v7h-7", 17, 2.900)}</div>
            <div class="cell">${line("M3 9.500L12 2l9 7.500V22h-6v-7.500H9V22H3z", 18, 2.500)}</div>
            <div class="omni">
              <div class="cell info">${line("M13 6.500h9M2 17.500h9M4.500 6.500m-2.500 0a2.500 2.500 0 1 0 5 0a2.500 2.500 0 1 0-5 0M19 17.500m-2.500 0a2.500 2.500 0 1 0 5 0a2.500 2.500 0 1 0-5 0", 17, 2.500)}</div>
              <div class="url"><b>iiot.ideaschain.com.tw</b>/dashboards/0bdcc320-9a81-11ee-bcc4-2b6af254e752</div>
              <div class="cell">${pic(svg`<g fill="none" stroke="currentColor" stroke-width="2.200"><circle cx="7" cy="12" r="6"/><path d="M12.500 9.500H23v4.500h-2v3.500h-4V14h-4.500"/></g><circle cx="7" cy="12" r="2.300" fill="currentColor"/>`, 22)}</div>
              <div class="cell">${glyph(P.star, 23)}</div>
            </div>
            <div class="tools row">
              <div class="cell">${glyph(P.queue, 25)}</div>
              <div class="cell">${line("M12 1v14M6 9.500l6 6 6-6M1.500 16v6h21v-6", 20, 2.700)}</div>
              <div class="cell">${pic(svg`<rect x="2" y="2" width="20" height="20" rx="1.500" fill="none" stroke="#fff" stroke-width="2.600"/><path d="M13 2h9v20h-9z" fill="#fff"/>`, 19)}</div>
              <div class="cell">${pic(svg`<circle cx="12" cy="12" r="12" fill="#0a8377"/><circle cx="12" cy="12" r="9.300" fill="#7fd3b0"/><circle cx="12" cy="12" r="8.200" fill="#ee2a52"/><g fill="#7a1230"><circle cx="12" cy="6" r=".6"/><circle cx="7.500" cy="9" r=".6"/><circle cx="16.500" cy="9" r=".6"/><circle cx="7.500" cy="15" r=".6"/><circle cx="16.500" cy="15" r=".6"/><circle cx="12" cy="18" r=".6"/></g>`, 25)}</div>
              <div class="cell">${glyph(P.more, 26)}</div>
            </div>
          </div>
          <div class="marks">
            ${BOOKMARKS.map(([art, label, w, gap]) => html`<div class="mark" style="width:${w}px;gap:${gap}px">${pic(art, 20)}<span>${label}</span></div>`)}
            ${line("M4 4l8 8-8 8M13 4l8 8-8 8", 14, 3)}
            <div class="mark-sep"></div>
            <div class="mark all">${pic(ART.folder, 20)}<span>所有書籤</span></div>
          </div>
        </div>
      </div>`;
  }

  private actions() {
    return html`<div class="acts">${glyph(P.edit, 25)}${glyph(P.download, 25)}${glyph(P.close, 25)}</div>`;
  }

  private page() {
    const barY: [number, string][] = [[449, "8"], [489, "6"], [528.3, "4"], [568.3, "2"], [608, "0"]];
    const lineY: [number, string][] = [[449.8, "160"], [504.8, "140"], [559.8, "120"], [614.800, "100"], [669.8, "80"], [724.8, "60"], [779.6, "40"]];
    return html`
      <div class="page">
        <div class="side">
          <div class="logo">
            <svg class="pic" width="73" height="80" viewBox="34 151 73 80">${brain}</svg>
            <div class="brand">IDEAS<span>Chain</span></div>
          </div>
          ${MENU.map(([d, t]) => html`<div class="item">${glyph(d)}<span>${t}</span></div>`)}
        </div>
        <div class="main">
          <div class="head row">
            <div class="row faded first">${glyph(P.dashboard)}<span class="crumb">儀表板庫</span></div>
            <span class="gt">&gt;</span>
            <div class="row second">${glyph(P.dashboard)}<span class="crumb2">F_monitor</span></div>
            <div class="links faded"><span>論壇</span><span>應用案例</span><span>開發工具</span><span>技術支援</span></div>
            <div class="cell expand">${glyph(P.full, 31)}</div>
            <div class="cell avatar">${glyph(P.account, 46)}</div>
            <div class="tenant faded">租戶管理員</div>
            <div class="cell menu">${glyph(P.more)}</div>
          </div>
          <div class="sub row">
            <div class="row views">${glyph(P.layers)}${glyph(P.compact)}</div>
            <div class="row filters">${glyph(P.gear)}${glyph(P.devices)}${glyph(P.clock)}</div>
            <span class="window">即時 - 最後 分</span>
            <div class="row exports">${glyph(P.download)}${glyph(P.full)}</div>
          </div>
          <div class="edit">
            <div class="label">標題 <sup>*</sup></div>
            <div class="name">F_monitor</div>
          </div>
          <div class="board">
            <div class="card bars">
              <div class="card-head row">New Timeseries Bars - Flot ${this.actions()}</div>
              <svg class="pic" width="586" height="200" viewBox="325 440 586 200">
                ${this.grid(BAR_TICKS, barY, 360, 877, 449, 608, 625.5, 343.5)}
                ${BAR_X.map(([x, v]) => svg`<rect x=${x} y=${608 - v * 19.85} width="5.200" height=${v * 19.85} fill="#ef9a9a" opacity=".9"/>`)}
                <rect x="359.500" y="449" width="517.500" height="159" fill="none" stroke="#666" stroke-width="1.400"/>
              </svg>
              <div class="legend">
                <div class="r avg">平均值</div>
                <div class="r"><div class="key"><div class="sw red"></div>Steps</div><span>2.36</span></div>
              </div>
            </div>
            <div class="card lines">
              <div class="card-head row">New Timeseries - Flot ${this.actions()}</div>
              <svg class="pic" width="983" height="372" viewBox="924 440 983 372">
                ${this.grid(LINE_TICKS, lineY, 962, 1873, 450, 779.5, 798, 957)}
                <rect x="962.300" y="450" width="910.700" height="329.600" fill="none" stroke="#858585" stroke-width="1.900"/>
                ${[[BLUE, "#2196f3"], [GREEN, "#4caf50"]].map(([pts, c]) => svg`
                  <g fill="none" stroke-linejoin="round">
                    <polyline points=${pts} transform="translate(1 3)" stroke="#000" stroke-opacity=".1" stroke-width="4"/>
                    <polyline points=${pts} transform="translate(.5 2)" stroke="#000" stroke-opacity=".1" stroke-width="2.500"/>
                    <polyline points=${pts} stroke=${c} stroke-width="2.500"/>
                  </g>`)}
              </svg>
              <div class="legend">
                <div class="r avg">平均值</div>
                <div class="r"><div class="key"><div class="sw blue"></div>x_acceleration</div><span>86.3</span></div>
                <div class="r"><div class="key"><div class="sw green"></div>y_acceleration</div><span>75.96</span></div>
              </div>
              <div class="grip"></div>
            </div>
            <div class="fabs">
              <div class="fab cell">${glyph(P.add)}</div><div class="fab cell">${glyph(P.check)}</div><div class="fab cell">${glyph(P.close)}</div>
            </div>
          </div>
        </div>
      </div>`;
  }

  private taskbar() {
    return html`
      <div class="task ui">
        <div class="weather row">
          ${pic(svg`<circle cx="15" cy="18" r="12" fill="#f58a1f"/><path d="M1 15a4 4 0 0 1 2-7 5 5 0 0 1 9 0 4 4 0 0 1 3 7z" fill="#a9c4ee"/><path d="M15 30a4 4 0 0 1 1-7 5 5 0 0 1 9 0 4 4 0 0 1 2 7z" fill="#b9d0f5"/><circle cx="25" cy="5" r="10" fill="#c42b1c"/><text x="25" y="10" text-anchor="middle" font-size="14" fill="#fff">1</text>`, 32, "0 0 32 32")}
          <div>29°C<br /><span class="grey-text">多雲時晴</span></div>
        </div>
        <div class="app cell">${pic(svg`<defs><linearGradient id="win" x2="1" y2="1"><stop stop-color="#45c5f7"/><stop offset="1" stop-color="#0a74d4"/></linearGradient></defs><path d="M0 0h14.300v14.300H0zM15.700 0H30v14.300H15.700zM0 15.700h14.300V30H0zM15.700 15.700H30V30H15.700z" fill="url(#win)"/>`, 29, "0 0 30 30")}</div>
        <div class="pill cell">${line("M10 3a7.500 7.500 0 1 1 0 15 7.500 7.500 0 0 1 0-15zM15.500 16l6.500 7", 20, 2)}<span>搜尋</span></div>
        ${APPS.map((a) => html`<div class="app cell ${a.cls ?? ""}">${pic(a.art, 31, "0 0 32 32")}${a.dot ? html`<div class="dot ${a.dot}"></div>` : ""}</div>`)}
        <div class="tray">
          <div class="cell">${line("M3 17l9-9 9 9", 15, 2.200)}</div>
          <div class="cell">${pic(svg`<path d="M5 18a5 5 0 0 1 0-9A7 7 0 0 1 18 7c4 1 4 6 2 11z" fill="#8c8c8c" stroke="#333" stroke-width="1.200"/><path d="M4 16c1-4 6-6 9-3" stroke="#d5d5d5" stroke-width="2.500" fill="none"/><circle cx="18" cy="17.500" r="7" fill="#d9202b"/><path d="M15.500 15l5 5M20.500 15l-5 5" stroke="#fff" stroke-width="1.800"/>`, 21)}</div>
          <div class="cell mic">${line("M12 1.500a3.500 3.500 0 0 1 3.500 3.500v7a3.500 3.500 0 0 1-7 0V5A3.500 3.500 0 0 1 12 1.500zM4.500 11v1.500a7.500 7.500 0 0 0 15 0V11M12 20v3.500", 20, 1.800)}</div>
          <div class="cell">${pic(svg`<circle cx="12" cy="12" r="12" fill="#1b1b1b"/><path d="M8 8l8 8M16 8l-8 8" stroke="#fff" stroke-width="2.300"/>`, 19)}</div>
          <div class="cell">${pic(svg`<g fill="none" stroke="#1b1b1b" stroke-width="1.600"><path d="M1 9.500a15 15 0 0 1 22 0M4.500 13a10.500 10.500 0 0 1 15 0M8 16.500a5.500 5.500 0 0 1 8 0"/></g><circle cx="12" cy="19.500" r="1.800" fill="#1b1b1b"/>`, 20)}</div>
          <div class="cell slim tight">${line("M2 9h4l5-5v16l-5-5H2zM14 9q2.500 3 0 6M17 6q5 6 0 12M20 3q7 9 0 18", 20, 1.600)}</div>
          <div class="cell slim">${pic(svg`<rect x="1" y="6" width="19" height="12" rx="3" fill="none" stroke="#1b1b1b" stroke-width="1.800"/><rect x="3.500" y="8.500" width="4" height="7" rx="1" fill="#1b1b1b"/><path d="M21.500 10h2v4h-2z" fill="#1b1b1b"/>`, 20)}</div>
          <div class="time">下午 12:17<br />2023/12/15</div>
          <div class="cell bell">${glyph(P.bell, 22)}</div>
        </div>
      </div>`;
  }

  render() {
    return html`${this.browser()}${this.page()}${this.taskbar()}`;
  }
}
